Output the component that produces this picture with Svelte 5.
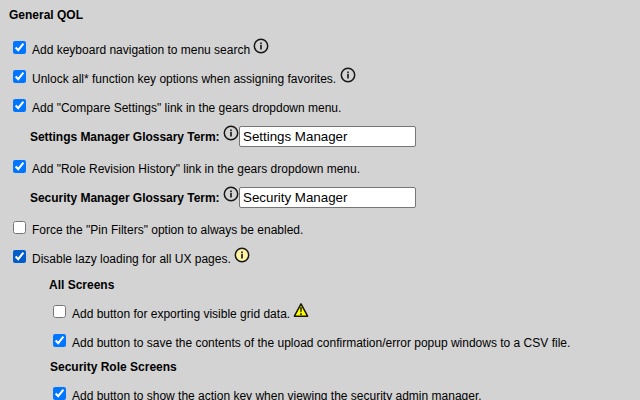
<script>
  const rows = [
    { kind: 'check', text: 'Add keyboard navigation to menu search', width: 218, checked: true, icon: 'info' },
    { kind: 'check', text: 'Unlock all* function key options when assigning favorites.', width: 305, checked: true, icon: 'info' },
    { kind: 'check', text: 'Add "Compare Settings" link in the gears dropdown menu.', width: 309, checked: true },
    { kind: 'term', text: 'Settings Manager Glossary Term:', value: 'Settings Manager' },
    { kind: 'check', text: 'Add "Role Revision History" link in the gears dropdown menu.', width: 328, checked: true },
    { kind: 'term', text: 'Security Manager Glossary Term:', value: 'Security Manager' },
    { kind: 'check', text: 'Force the "Pin Filters" option to always be enabled.', width: 272, checked: false },
    { kind: 'check', text: 'Disable lazy loading for all UX pages.', width: 199, checked: true, active: true, icon: 'highlight' }
  ];
  const screens = [
    { title: 'All Screens', rows: [
      { text: 'Add button for exporting visible grid data.', width: 218, checked: false, icon: 'warning' },
      { text: 'Add button to save the contents of the upload confirmation/error popup windows to a CSV file.', width: 498, checked: true }
    ] },
    { title: 'Security Role Screens', rows: [
      { text: 'Add button to show the action key when viewing the security admin manager.', width: 409, checked: true }
    ] }
  ];
</script>

{#snippet mark(type)}
  <svg class="icon" viewBox="0 0 16 16" width="16" height="16">
    {#if type === 'warning'}
      <path d="M8 1.8 14.6 14.2H1.4Z" fill="#ffff00" stroke="#17170a" stroke-width="1.5" stroke-linejoin="round" />
      <path d="M7 5.2h2l-.4 5H7.4ZM7.1 11.2h1.8v1.7H7.1Z" fill="#363500" />
    {:else}
      <circle cx="8" cy="8" r="6.7" fill={type === 'highlight' ? '#fff4a3' : 'none'} stroke="#161616" stroke-width="1.5" />
      <path d="M7.1 4.6h1.8v1.6H7.1ZM7.1 7.1h1.8v4.4H7.1Z" fill="#292929" />
    {/if}
  </svg>
{/snippet}

{#snippet option(row)}
  <label class="row">
    <input class="box" class:active={row.active} type="checkbox" checked={row.checked} />
    <span class="text" style:width="{row.width}px">{row.text}</span>
    {#if row.icon}{@render mark(row.icon)}{/if}
  </label>
{/snippet}

<main>
  <h2>General QOL</h2>
  {#each rows as row}
    {#if row.kind === 'term'}
      <label class="row term">
        <b class="text">{row.text}</b>
        {@render mark('info')}
        <input class="field" type="text" value={row.value} />
      </label>
    {:else}
      {@render option(row)}
    {/if}
  {/each}
  <div class="screens">
    {#each screens as group}
      <section>
        <h3>{group.title}</h3>
        {#each group.rows as row}{@render option(row)}{/each}
      </section>
    {/each}
  </div>
</main>

<style>
  :global(body) { margin: 0; overflow: hidden; background: #d3d3d3; }
  main {
    height: 400px;
    overflow: hidden;
    box-sizing: border-box;
    padding-left: 9px;
    background: #d3d3d3;
    color: #000;
    font: 12px/14px Arial, "Liberation Sans", sans-serif;
  }
  h2, h3 { margin: 0; font-size: 12px; line-height: 14px; box-sizing: border-box; }
  h2 { height: 36px; padding-top: 8px; }
  .row { display: flex; align-items: flex-start; height: 29px; padding-left: 4px; }
  .box { flex: none; width: 13px; height: 13px; margin: 5px 6px 0 0; }
  .active { accent-color: #005cc8; }
  .text { flex: none; margin-top: 7px; white-space: nowrap; }
  .icon { flex: none; margin: 2px 0 0 3px; }
  .term { height: 32px; padding-left: 21px; }
  .term .text { width: 190px; letter-spacing: -0.03px; }
  .term .icon { margin-left: 3px; }
  .field {
    box-sizing: border-box;
    width: 177px;
    height: 21px;
    margin: 3px 0 0;
    padding: 1px 3px;
    border: 1px solid #767676;
    border-radius: 2px;
    background: #fff;
    color: #000;
    font: 13.333px Arial, "Liberation Sans", sans-serif;
  }
  .screens { padding-left: 40px; }
  h3 { height: 26px; padding-top: 4px; }
  section + section h3 { height: 24px; padding-left: 1px; padding-top: 2px; }
</style>
